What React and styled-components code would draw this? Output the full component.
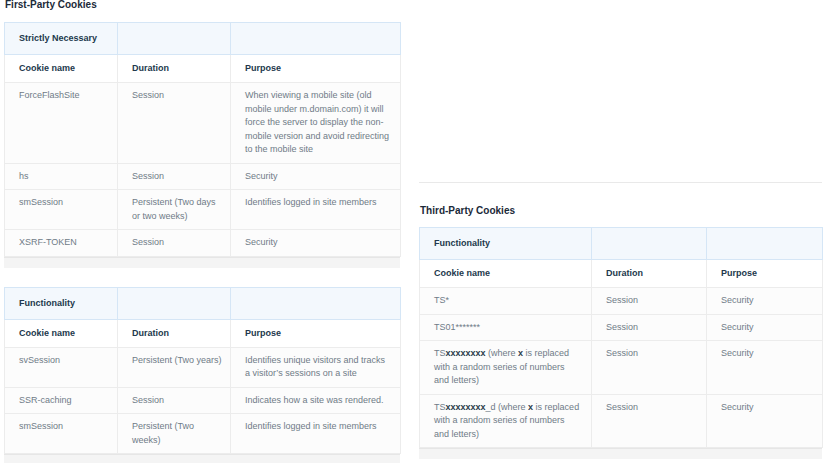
import styled, { createGlobalStyle } from 'styled-components';

const GlobalStyle = createGlobalStyle`
  html, body {
    margin: 0;
    padding: 0;
    background: #ffffff;
  }
  body {
    font-family: 'Liberation Sans', Arial, sans-serif;
    -webkit-font-smoothing: antialiased;
  }
`;

const Page = styled.div`
  display: flex;
  align-items: flex-start;
  gap: 19px;
  padding: 0 12px 0 4px;
  width: 834px;
  height: 463px;
  box-sizing: border-box;
  overflow: hidden;
`;

const Column = styled.div`
  display: flex;
  flex-direction: column;
  width: ${(props) => props.width}px;
  flex-shrink: 0;
  padding-top: ${(props) => props.offset || 0}px;
`;

const Divider = styled.hr`
  border: none;
  border-top: 1px solid #e9e9e9;
  margin: 0 0 23px;
  width: 100%;
`;

const SectionTitle = styled.h2`
  margin: -1px 0 ${(props) => props.spacing || 11}px 1px;
  font-size: 10px;
  line-height: 12px;
  font-weight: 700;
  color: #1b2a39;
`;

const TableBlock = styled.div`
  margin-bottom: ${(props) => props.gap || 0}px;
`;

const Table = styled.table`
  width: 100%;
  table-layout: fixed;
  border-collapse: collapse;
  font-size: 9px;
`;

const Col = styled.col`
  width: ${(props) => props.width}px;
`;

const CategoryCell = styled.th`
  background: #f3f8fd;
  border: 1px solid #d5e6f6;
  padding: 9px 14px;
  line-height: 13px;
  text-align: left;
  font-weight: 700;
  color: #22384c;
`;

const HeadCell = styled.th`
  background: #ffffff;
  border: 1px solid #ececec;
  border-top: none;
  padding: 7px 14px;
  line-height: 13px;
  text-align: left;
  font-weight: 700;
  color: #22384c;
`;

const Cell = styled.td`
  background: #fcfcfc;
  border: 1px solid #ececec;
  padding: 6px 10px 6px 14px;
  line-height: 13.5px;
  vertical-align: top;
  color: #6f7b87;

  &:nth-child(2) {
    padding-right: 7px;
  }
`;

const Strong = styled.b`
  font-weight: 700;
  color: #2a3b4b;
`;

const ScrollStrip = styled.div`
  height: 10px;
  background: #f4f4f4;
  border-top: 1px solid #e6e6e6;
`;

const firstParty = [
  {
    category: 'Strictly Necessary',
    rows: [
      ['ForceFlashSite', 'Session', 'When viewing a mobile site (old mobile under m.domain.com) it will force the server to display the non-mobile version and avoid redirecting to the mobile site'],
      ['hs', 'Session', 'Security'],
      ['smSession', 'Persistent (Two days or two weeks)', 'Identifies logged in site members'],
      ['XSRF-TOKEN', 'Session', 'Security'],
    ],
  },
  {
    category: 'Functionality',
    rows: [
      ['svSession', 'Persistent (Two years)', 'Identifies unique visitors and tracks a visitor’s sessions on a site'],
      ['SSR-caching', 'Session', 'Indicates how a site was rendered.'],
      ['smSession', 'Persistent (Two weeks)', 'Identifies logged in site members'],
    ],
  },
];

const thirdParty = {
  category: 'Functionality',
  rows: [
    ['TS*', 'Session', 'Security'],
    ['TS01*******', 'Session', 'Security'],
    [
      <>TS<Strong>xxxxxxxx</Strong> (where <Strong>x</Strong> is replaced with a random series of numbers and letters)</>,
      'Session',
      'Security',
    ],
    [
      <>TS<Strong>xxxxxxxx</Strong>_d (where <Strong>x</Strong> is replaced with a random series of numbers and letters)</>,
      'Session',
      'Security',
    ],
  ],
};

const CookieTable = ({ category, rows, widths, gap }) => (
  <TableBlock gap={gap}>
    <Table>
      <colgroup>
        {widths.map((w, i) => (
          <Col key={i} width={w} />
        ))}
      </colgroup>
      <thead>
        <tr>
          <CategoryCell>{category}</CategoryCell>
          <CategoryCell />
          <CategoryCell />
        </tr>
        <tr>
          <HeadCell>Cookie name</HeadCell>
          <HeadCell>Duration</HeadCell>
          <HeadCell>Purpose</HeadCell>
        </tr>
      </thead>
      <tbody>
        {rows.map((row, i) => (
          <tr key={i}>
            {row.map((value, j) => (
              <Cell key={j}>{value}</Cell>
            ))}
          </tr>
        ))}
      </tbody>
    </Table>
    <ScrollStrip />
  </TableBlock>
);

export default function App() {
  return (
    <>
      <GlobalStyle />
      <Page>
        <Column width={396}>
          <SectionTitle>First-Party Cookies</SectionTitle>
          <CookieTable {...firstParty[0]} widths={[113, 113, 170]} gap={19} />
          <CookieTable {...firstParty[1]} widths={[113, 113, 170]} />
        </Column>
        <Column width={403} offset={182}>
          <Divider />
          <SectionTitle spacing={10}>Third-Party Cookies</SectionTitle>
          <CookieTable {...thirdParty} widths={[172, 115, 116]} />
        </Column>
      </Page>
    </>
  );
}
